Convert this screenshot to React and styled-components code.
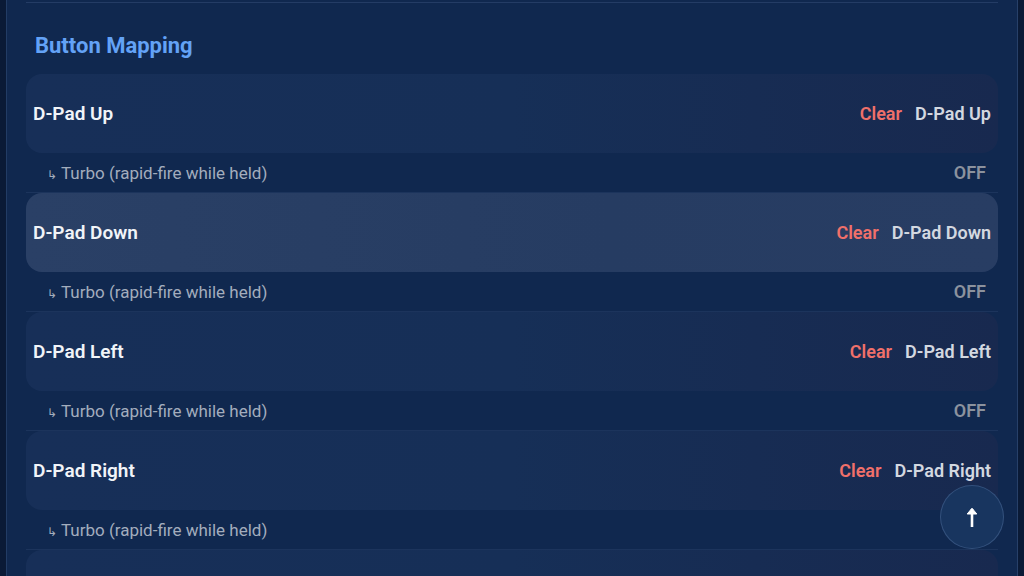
import React, { useState } from 'react';
import styled, { createGlobalStyle } from 'styled-components';

const GlobalStyle = createGlobalStyle`
  html, body {
    margin: 0;
    padding: 0;
    background-color: #0a1a36;
    font-family: Roboto, "Liberation Sans", sans-serif;
  }
`;

const Page = styled.div`
  height: 576px;
  overflow: hidden;
  padding-left: 6px;
  padding-right: 6px;
`;

const Panel = styled.div`
  height: 100%;
  background-color: #10284f;
  border-left: 1px solid rgba(120, 150, 200, 0.18);
  border-right: 1px solid rgba(120, 150, 200, 0.22);
  padding: 2px 19px 0 19px;
`;

const Section = styled.section`
  border-top: 1px solid rgba(140, 170, 220, 0.16);
  padding-top: 30px;
`;

const Title = styled.h2`
  margin: 0 0 15px 9px;
  font-size: 22px;
  line-height: 26px;
  font-weight: 700;
  color: #63a2f6;
`;

const MappingList = styled.div`
  display: flex;
  flex-direction: column;
`;

const Card = styled.div`
  height: 79px;
  display: flex;
  align-items: center;
  justify-content: space-between;
  padding: 0 7px;
  border-radius: 16px;
  background: ${(p) =>
    p.$active
      ? 'linear-gradient(90deg, #2a4066 0%, #263c62 60%, #283d63 100%)'
      : 'linear-gradient(90deg, #172f58 0%, #162f57 50%, #18294f 100%)'};
  transition: background-color 0.2s ease-in-out;
`;

const Label = styled.span`
  font-size: 19px;
  font-weight: 600;
  color: #f1f4f8;
`;

const Actions = styled.div`
  display: flex;
  align-items: center;
  gap: 13px;
`;

const ClearButton = styled.button`
  background: none;
  border: none;
  padding: 0;
  font-family: inherit;
  font-size: 18px;
  font-weight: 600;
  color: #f0706a;
  cursor: pointer;
`;

const Binding = styled.span`
  font-size: 18px;
  font-weight: 600;
  color: #d3d8e0;
`;

const TurboRow = styled.div`
  height: 39px;
  display: flex;
  align-items: center;
  justify-content: space-between;
  padding: 0 12px 0 21px;
  border-bottom: 1px solid rgba(140, 170, 220, 0.1);
`;

const TurboLabel = styled.span`
  font-size: 17px;
  color: #a3adbd;

  small {
    font-size: 12px;
    margin-right: 4px;
  }
`;

const Toggle = styled.button`
  background: none;
  border: none;
  padding: 0;
  font-family: inherit;
  font-size: 18px;
  font-weight: 600;
  color: #8b929e;
  cursor: pointer;
`;

const ScrollTop = styled.button`
  position: fixed;
  right: 20px;
  bottom: 27px;
  width: 64px;
  height: 64px;
  padding: 0;
  border-radius: 50%;
  border: 1px solid rgba(150, 180, 230, 0.22);
  background-color: #18355f;
  display: flex;
  align-items: center;
  justify-content: center;
  cursor: pointer;
`;

const UpArrow = () => (
  <svg width="14" height="22" viewBox="0 0 14 22" fill="none">
    <path d="M7 21V3" stroke="#fff" strokeWidth="2.6" />
    <path d="M2.2 8L7 2.2L11.8 8Z" fill="#fff" stroke="#fff" strokeWidth="1" strokeLinejoin="round" />
  </svg>
);

const buttons = ['D-Pad Up', 'D-Pad Down', 'D-Pad Left', 'D-Pad Right', 'Start'];

const App = () => {
  const [hovered, setHovered] = useState('D-Pad Down');
  const [bindings, setBindings] = useState(
    Object.fromEntries(buttons.map((b) => [b, b]))
  );

  return (
    <>
      <GlobalStyle />
      <Page>
        <Panel>
          <Section>
            <Title>Button Mapping</Title>
            <MappingList>
              {buttons.map((name) => (
                <div key={name}>
                  <Card
                    $active={hovered === name}
                    onMouseEnter={() => setHovered(name)}
                  >
                    <Label>{name}</Label>
                    <Actions>
                      <ClearButton
                        onClick={() => setBindings({ ...bindings, [name]: '' })}
                      >
                        Clear
                      </ClearButton>
                      <Binding>{bindings[name] || 'Unbound'}</Binding>
                    </Actions>
                  </Card>
                  <TurboRow>
                    <TurboLabel>
                      <small>↳</small>Turbo (rapid-fire while held)
                    </TurboLabel>
                    <Toggle>OFF</Toggle>
                  </TurboRow>
                </div>
              ))}
            </MappingList>
          </Section>
        </Panel>
        <ScrollTop aria-label="Back to top" onClick={() => window.scrollTo(0, 0)}>
          <UpArrow />
        </ScrollTop>
      </Page>
    </>
  );
};

export default App;
